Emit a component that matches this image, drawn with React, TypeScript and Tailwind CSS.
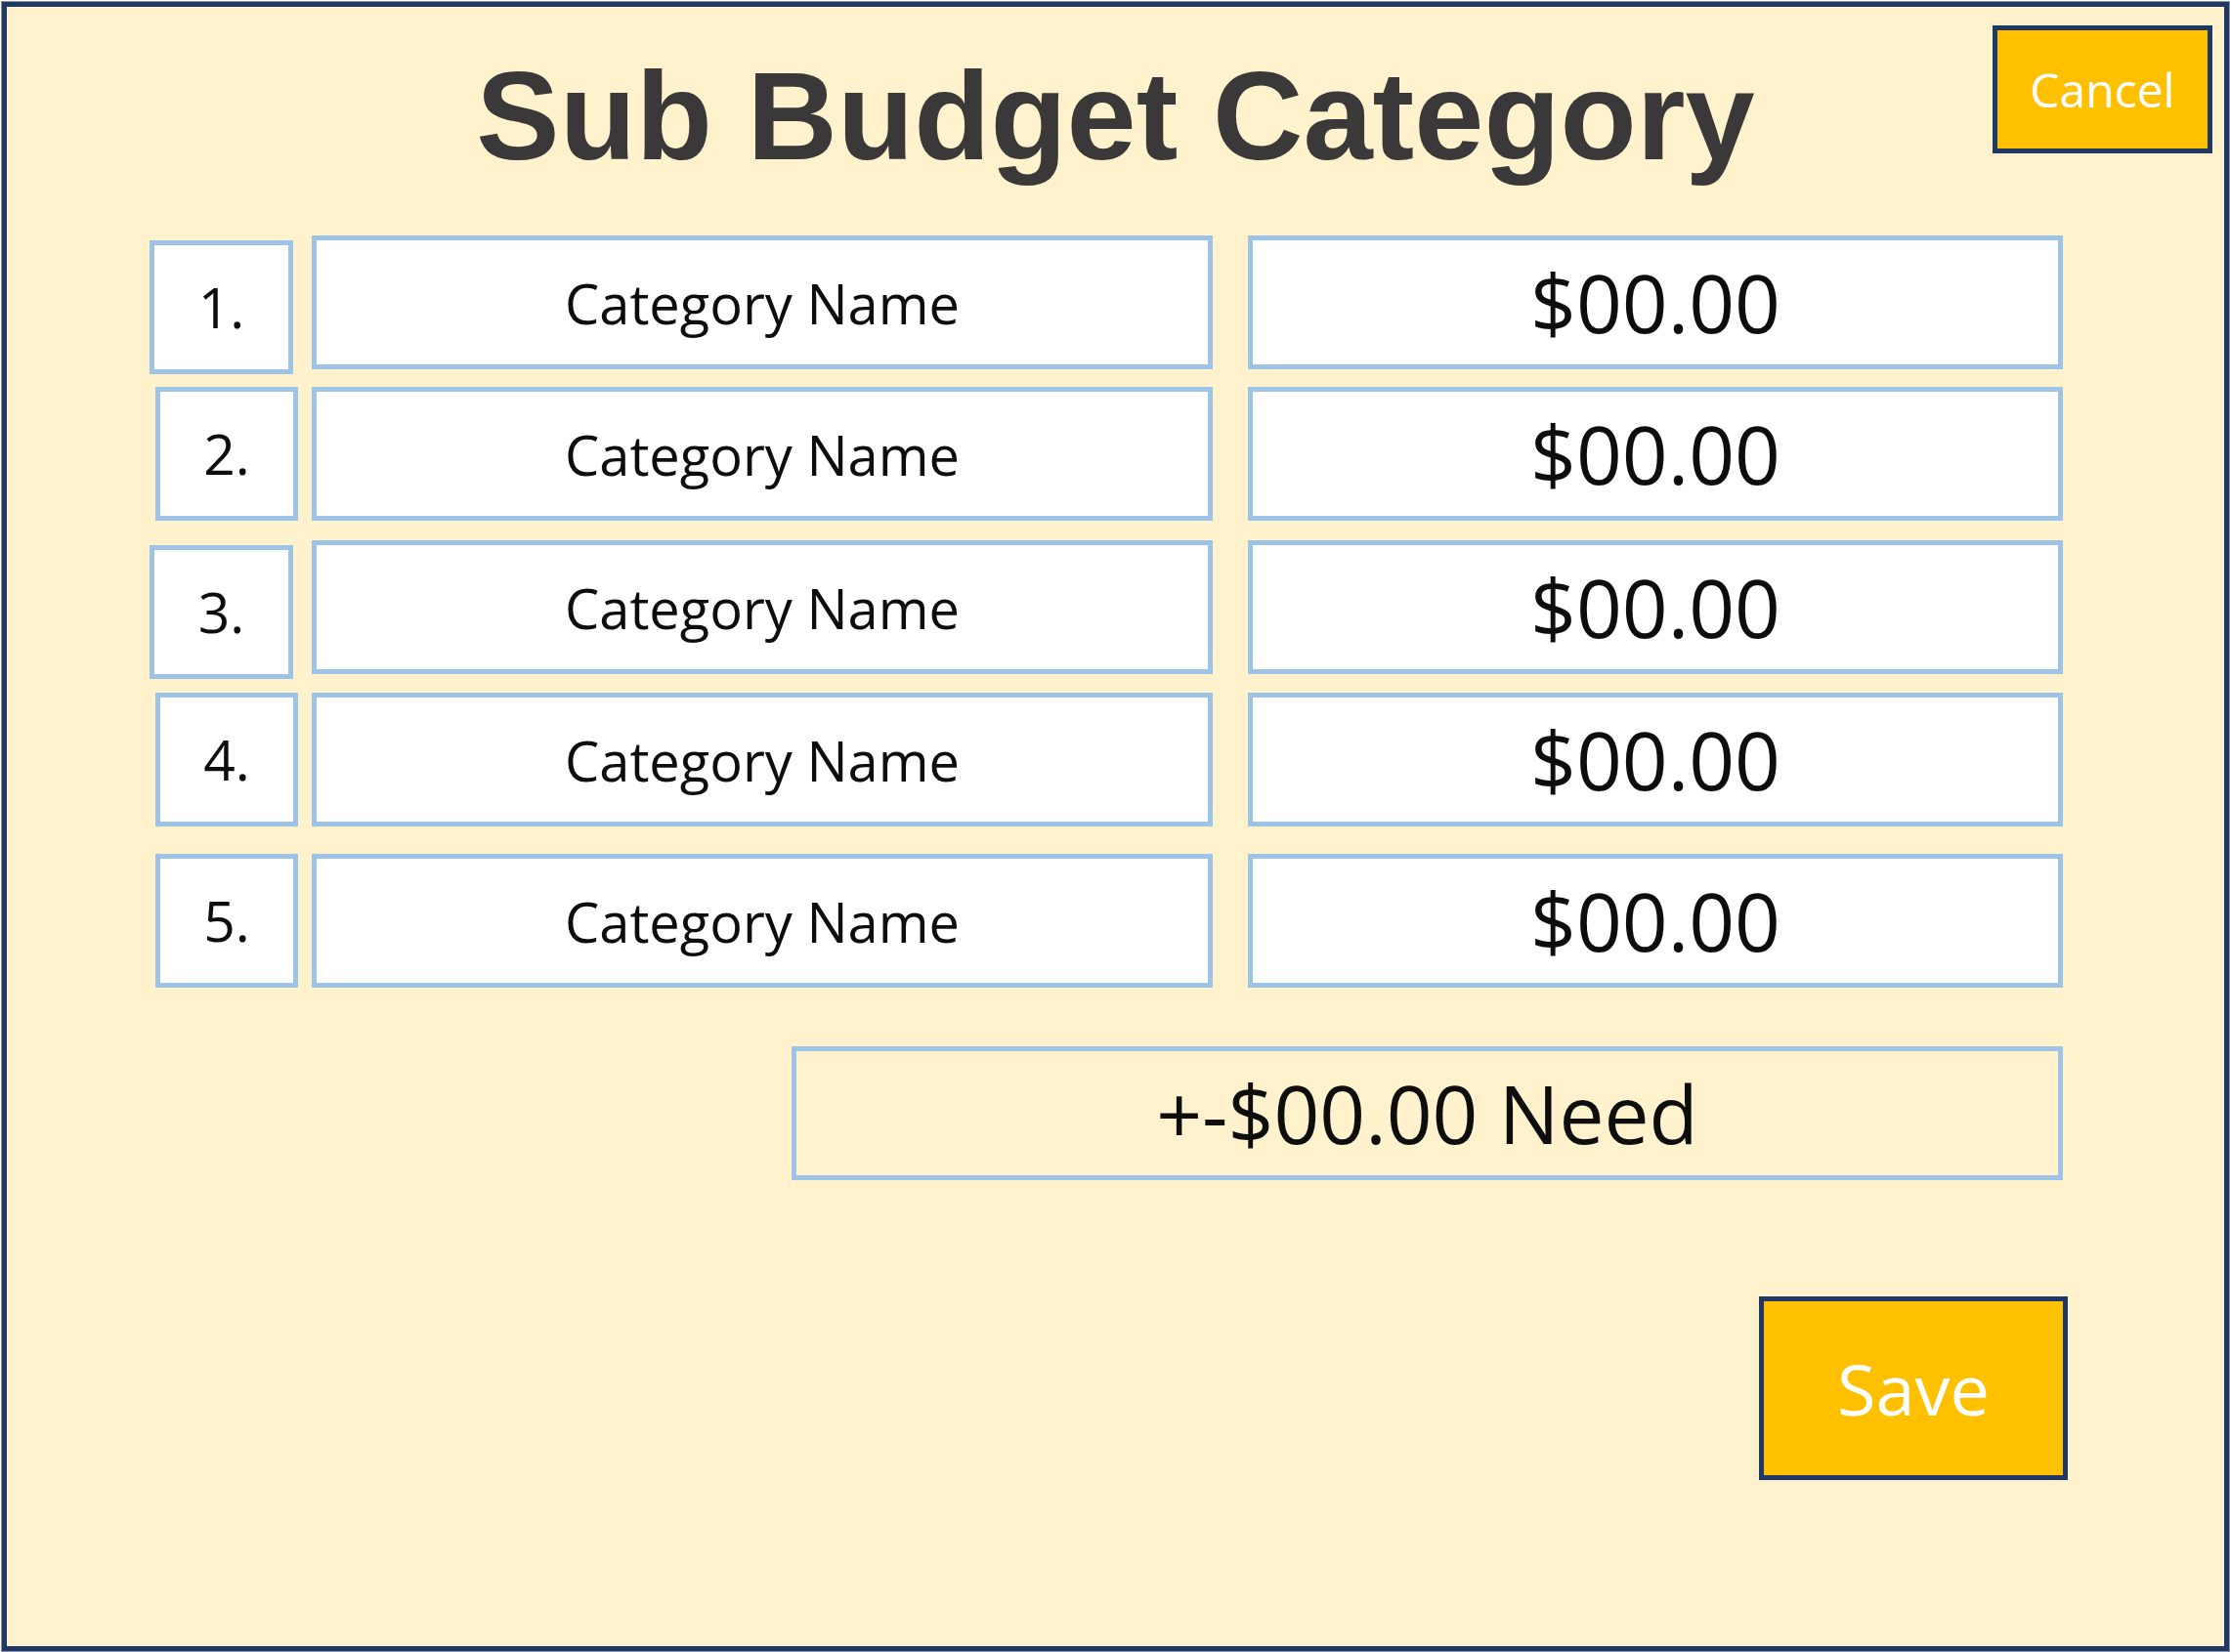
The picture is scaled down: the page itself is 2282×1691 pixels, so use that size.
import React from 'react'

interface Row {
  num: string
  shifted: boolean
  gap: string
}

const rows: Row[] = [
  { num: '1.', shifted: true, gap: 'mt-0' },
  { num: '2.', shifted: false, gap: 'mt-[18px]' },
  { num: '3.', shifted: true, gap: 'mt-[20px]' },
  { num: '4.', shifted: false, gap: 'mt-[19px]' },
  { num: '5.', shifted: false, gap: 'mt-[28px]' },
]

function CategoryRow({ num, shifted, gap }: Row) {
  return (
    <div className={`flex items-start h-[137px] ${gap}`}>
      {/* number cell sits a few px off in the mock, keep it */}
      <div className="w-[166px] h-full">
        <div
          className={`flex items-center justify-center bg-white border-[5px] border-[#9dc3e6] h-[137px] text-[57px] text-[#0d0d0d] ${
            shifted ? 'w-[147px] mt-[5px]' : 'w-[146px] ml-[6px]'
          }`}
        >
          {num}
        </div>
      </div>
      <div className="flex items-center justify-center w-[922px] h-full bg-white border-[5px] border-[#9dc3e6] text-[56px] text-[#0d0d0d]">
        Category Name
      </div>
      <div className="flex items-center justify-center w-[834px] h-full ml-[36px] bg-white border-[5px] border-[#9dc3e6] text-[82px] text-[#0d0d0d]">
        $00.00
      </div>
    </div>
  )
}

export default function App() {
  return (
    <div className="w-[2282px] h-[1691px] bg-white pt-[2px] pl-[2px] font-['Open_Sans',sans-serif] font-medium">
      <div className="w-[2279px] h-[1688px] border-[5px] border-[#1f3864] bg-[#fff2cc] outline outline-1 outline-[#8d93a3]">
        {/* header: title centred, cancel in the corner */}
        <div className="grid grid-cols-[1fr_auto_1fr] items-start h-[234px]">
          <div />
          <h1 className="mt-[48px] font-['Liberation_Sans',Arial,sans-serif] font-bold text-[128px] leading-none text-[#3a3838] whitespace-nowrap">
            Sub Budget Category
          </h1>
          <button className="justify-self-end mt-[19px] mr-[12px] w-[225px] h-[131px] bg-[#ffc000] border-[5px] border-[#1f3864] text-white text-[48px] leading-none">
            Cancel
          </button>
        </div>

        <div className="flex flex-col ml-[146px] w-[1958px]">
          {rows.map((r) => (
            <CategoryRow key={r.num} {...r} />
          ))}

          <div className="self-end flex items-center justify-center mt-[60px] w-[1301px] h-[137px] border-[5px] border-[#9dc3e6] text-[82px] text-[#0d0d0d]">
            +-$00.00 Need
          </div>

          <button className="ml-[1647px] mt-[119px] w-[316px] h-[188px] bg-[#ffc000] border-[5px] border-[#1f3864] text-white text-[72px] leading-none">
            Save
          </button>
        </div>
      </div>
    </div>
  )
}
